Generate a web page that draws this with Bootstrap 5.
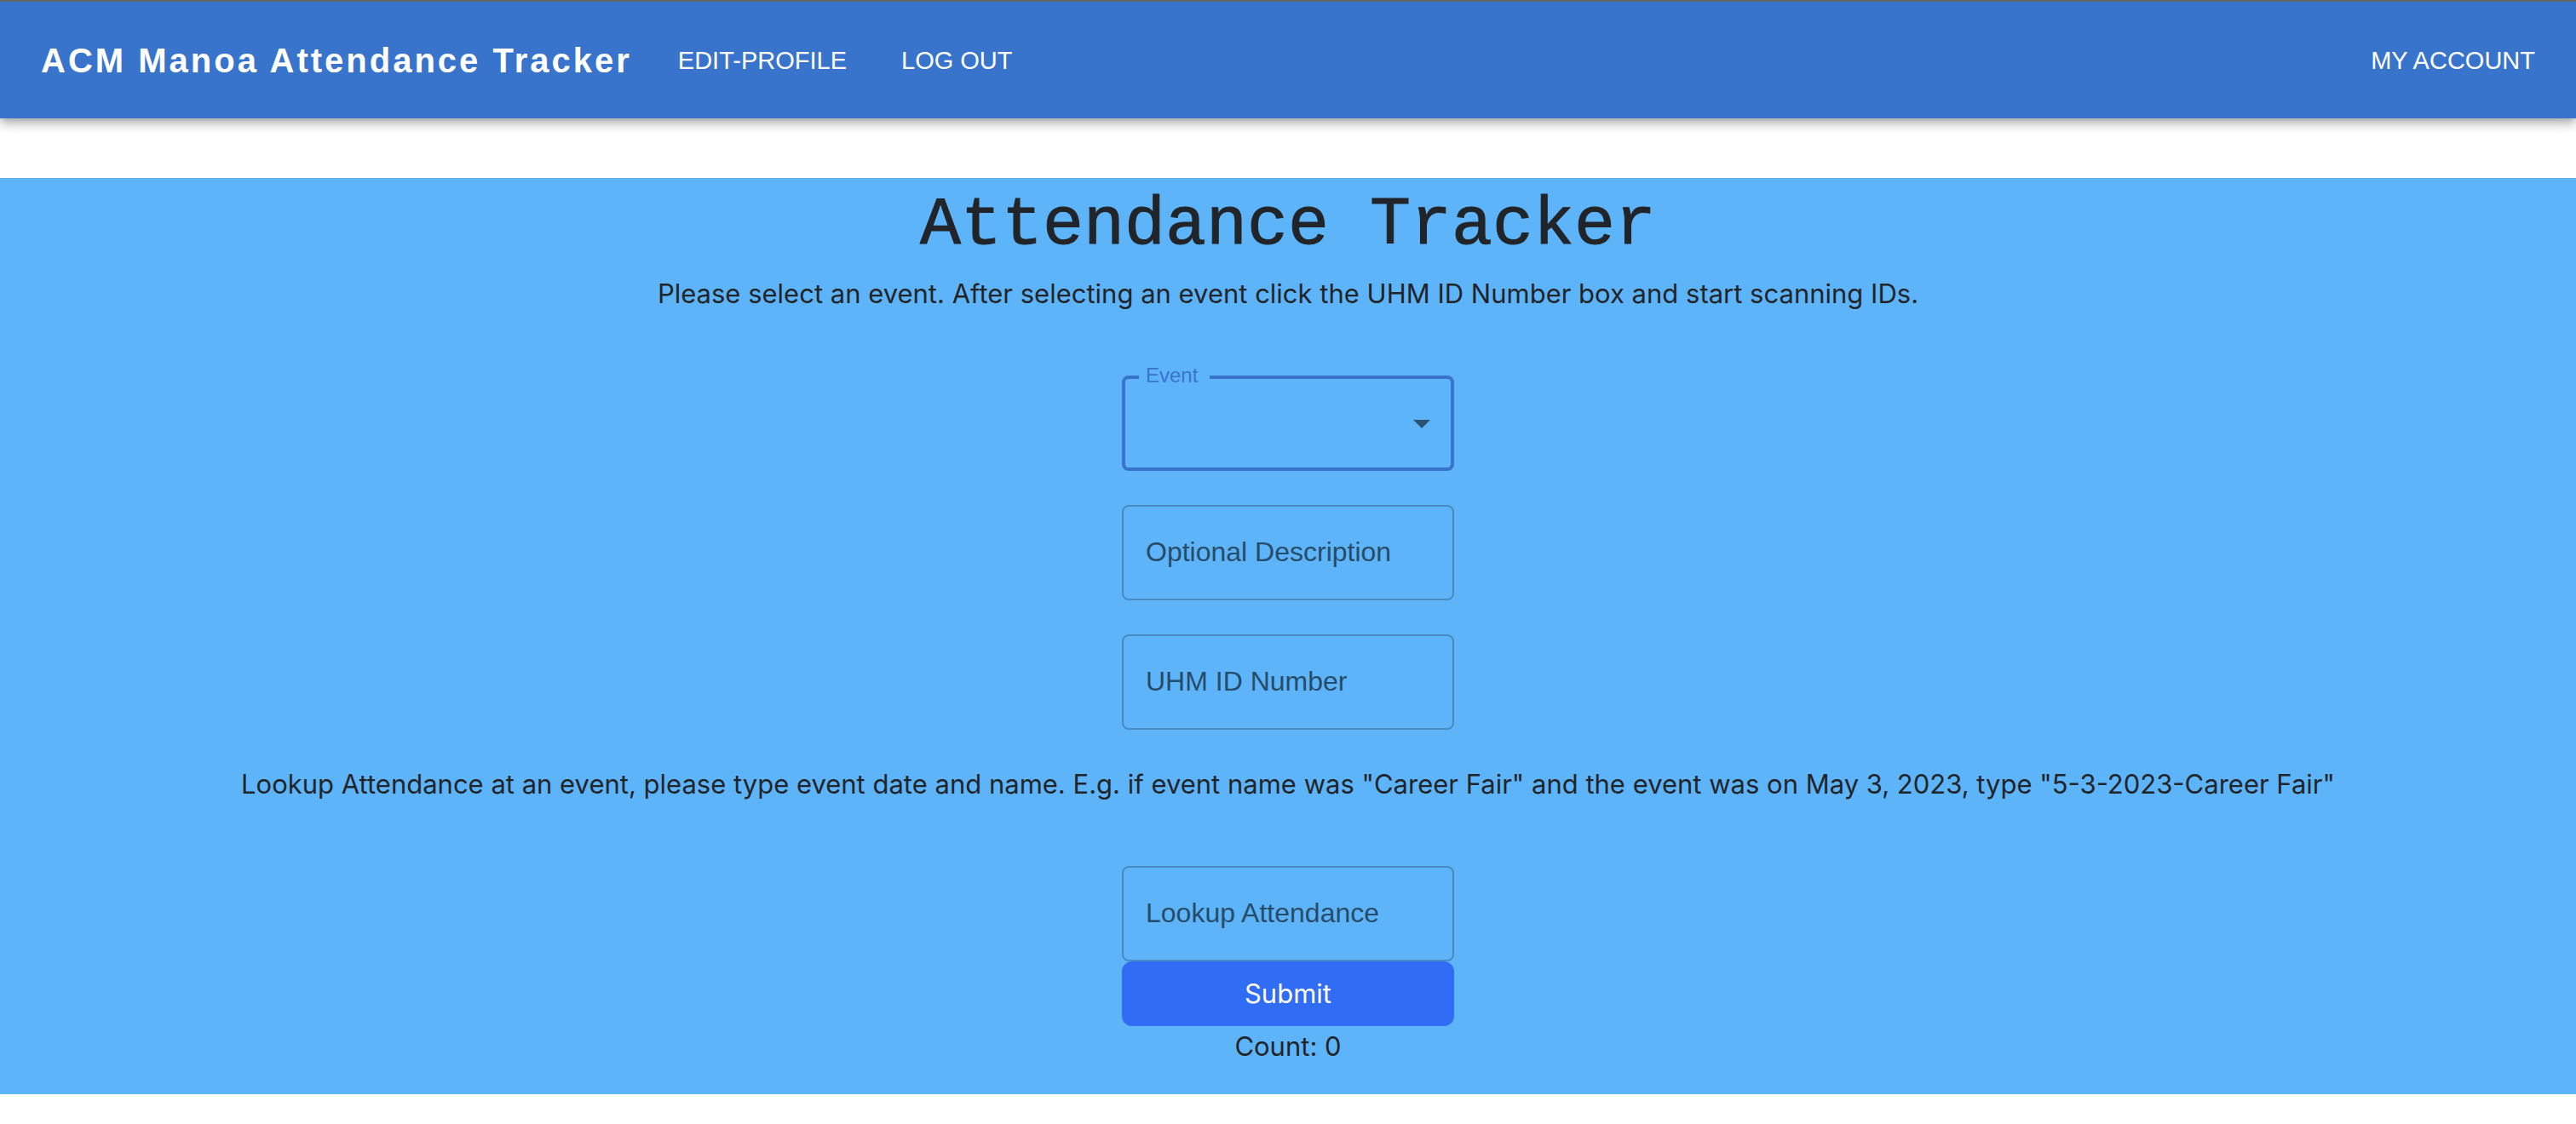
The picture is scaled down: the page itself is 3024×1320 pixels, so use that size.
<!DOCTYPE html>
<html lang="en">
<head>
<meta charset="utf-8">
<meta name="viewport" content="width=device-width, initial-scale=1">
<title>ACM Manoa Attendance Tracker</title>
<link href="https://cdn.jsdelivr.net/npm/bootstrap@5.3.0/dist/css/bootstrap.min.css" rel="stylesheet">
<style>
  :root { font-size: 32px; --brand: #3874cb; --sky: #5eb4f9; }
  body { font-family: Inter, "Liberation Sans", sans-serif; font-size: 31px; line-height: 48px; color: #212529; background: #fff; }
  .topbar {
    font-family: "Liberation Sans", Arial, sans-serif;
    background: var(--brand);
    border-top: 2px solid #646464;
    min-height: 139px;
    margin-bottom: 70px;
    box-shadow: 0 4px 8px -2px rgba(0,0,0,.2), 0 8px 10px rgba(0,0,0,.14), 0 2px 20px rgba(0,0,0,.12);
  }
  .topbar a { color: #fff; text-decoration: none; }
  .brand-name { font-size: 40px; line-height: 48px; font-weight: 700; letter-spacing: 3px; margin-right: 54px; }
  .bar-links { column-gap: 64px; }
  .bar-link { font-size: 29px; line-height: 48px; text-transform: uppercase; }
  .tracker { background: var(--sky); }
  .tracker-title { font-family: "Liberation Mono", "Courier New", monospace; font-size: 80px; line-height: 112px; -webkit-text-stroke: 1px currentColor; }
  .intro { margin-bottom: 72px; }
  .lookup-hint { margin-top: 40px; }
  .field-col { width: 390px; }
  .fields { row-gap: 40px; }
  .field { font-family: "Liberation Sans", Arial, sans-serif; font-size: 32px; }
  .field > .form-control, .field > .form-select {
    height: 112px; min-height: 112px; padding: 32px 26px;
    background: transparent; border: 2px solid #478bc0; border-radius: 8px; box-shadow: none;
  }
  .field > label { height: 112px; padding: 32px 26px; line-height: 42px; border: 2px solid transparent; color: #264c69; }
  .field > .form-select { border: 4px solid var(--brand); }
  .field > .form-select ~ label {
    top: -16px; left: 20px; width: auto; height: 32px; padding: 0 14px 0 8px; border: 0;
    font-size: 24px; line-height: 32px; color: var(--brand); background: var(--sky);
    opacity: 1; transform: none;
  }
  .caret { position: absolute; top: 32px; right: 14px; width: 48px; height: 48px; fill: #2b5373; pointer-events: none; }
  .submit-btn { --bs-btn-bg: #316cf4; --bs-btn-border-color: #316cf4; --bs-btn-border-width: 2px; --bs-btn-font-size: 31px; --bs-btn-line-height: 48px; }
</style>
</head>
<body>
<nav class="topbar d-flex align-items-center px-4" aria-label="Main">
  <a class="brand-name" href="#">ACM Manoa Attendance Tracker</a>
  <div class="bar-links d-flex flex-grow-1">
    <a class="bar-link" href="#">Edit-Profile</a>
    <a class="bar-link" href="#">Log out</a>
  </div>
  <a class="bar-link" href="#">My Account</a>
</nav>
<main class="tracker text-center pb-3">
  <h1 class="tracker-title mb-0">Attendance Tracker</h1>
  <p class="intro">Please select an event. After selecting an event click the UHM ID Number box and start scanning IDs.</p>
  <form>
    <div class="field-col mx-auto d-grid fields">
      <div class="form-floating field">
        <select class="form-select" id="event"><option value=""></option></select>
        <label for="event">Event</label>
        <svg class="caret" viewBox="0 0 24 24" aria-hidden="true"><path d="M7 10l5 5 5-5z"/></svg>
      </div>
      <div class="form-floating field">
        <input class="form-control" id="description" type="text" placeholder=" ">
        <label for="description">Optional Description</label>
      </div>
      <div class="form-floating field">
        <input class="form-control" id="uhm-id" type="text" placeholder=" ">
        <label for="uhm-id">UHM ID Number</label>
      </div>
    </div>
    <p class="intro lookup-hint">Lookup Attendance at an event, please type event date and name. E.g. if event name was "Career Fair" and the event was on May 3, 2023, type "5-3-2023-Career Fair"</p>
    <div class="field-col mx-auto">
      <div class="form-floating field">
        <input class="form-control" id="lookup" type="text" placeholder=" ">
        <label for="lookup">Lookup Attendance</label>
      </div>
      <button class="btn btn-primary submit-btn w-100" type="submit">Submit</button>
    </div>
  </form>
  <div>Count: 0</div>
</main>
<script src="https://cdn.jsdelivr.net/npm/bootstrap@5.3.0/dist/js/bootstrap.bundle.min.js"></script>
</body>
</html>
